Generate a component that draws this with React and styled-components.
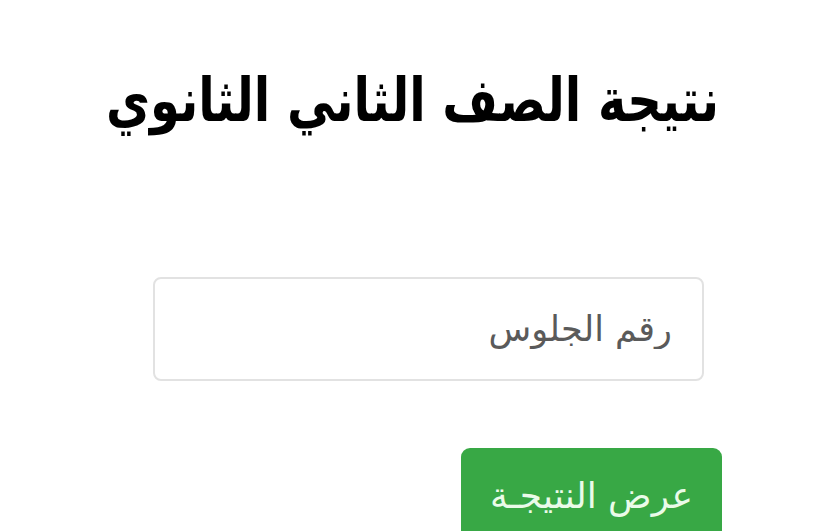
import React from 'react';
import styled, { createGlobalStyle } from 'styled-components';

const Global = createGlobalStyle`
  html, body {
    margin: 0;
    padding: 0;
    background: #ffffff;
    overflow: hidden;
  }
`;

const Page = styled.div`
  width: 825px;
  height: 531px;
  display: flex;
  flex-direction: column;
  direction: rtl;
  font-family: "DejaVu Sans", "Noto Sans", sans-serif;
`;

const Title = styled.h1`
  margin: 58px 0 0;
  text-align: center;
  font-size: 48px;
  font-weight: bold;
  color: #000;
  line-height: 84px;
  transform: scaleY(1.25);
`;

const Form = styled.div`
  margin: 135px 103px 0 0;
  width: 569px;
  display: flex;
  flex-direction: column;
  align-items: flex-start;
`;

const Field = styled.input`
  box-sizing: border-box;
  width: 551px;
  height: 104px;
  margin-right: 18px;
  border: 2px solid #e2e2e2;
  border-radius: 8px;
  padding: 0 30px 0 20px;
  font-family: inherit;
  font-size: 35px;
  direction: rtl;
  color: #444;
  outline: none;
  &::placeholder {
    color: #5a5a5a;
  }
`;

const Button = styled.button`
  margin-top: 67px;
  width: 261px;
  height: 100px;
  border: none;
  border-radius: 9px;
  background: #38a845;
  color: #eafbe9;
  font-family: inherit;
  font-size: 36px;
  padding-bottom: 6px;
`;

export default function App() {
  return (
    <>
      <Global />
      <Page>
        <Title>نتيجة الصف الثاني الثانوي</Title>
        <Form>
          <Field placeholder="رقم الجلوس" />
          <Button>عرض النتيجـة</Button>
        </Form>
      </Page>
    </>
  );
}
